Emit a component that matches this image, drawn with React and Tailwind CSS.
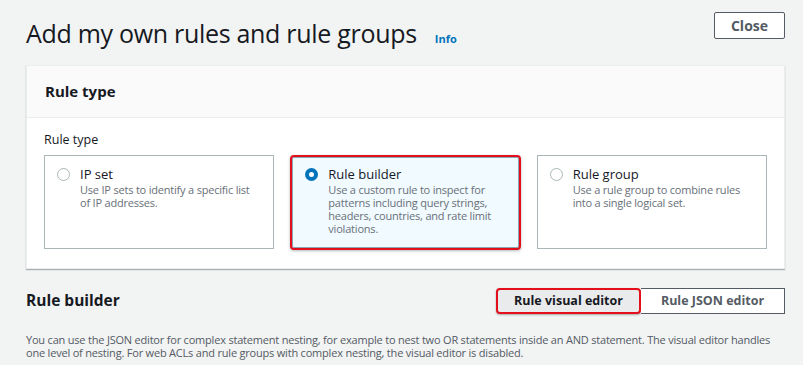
import React, { useState } from 'react';

const ruleTypes = [
  {
    id: 'ipset',
    title: 'IP set',
    desc: 'Use IP sets to identify a specific list of IP addresses.',
  },
  {
    id: 'builder',
    title: 'Rule builder',
    desc: 'Use a custom rule to inspect for patterns including query strings, headers, countries, and rate limit violations.',
  },
  {
    id: 'group',
    title: 'Rule group',
    desc: 'Use a rule group to combine rules into a single logical set.',
  },
];

function Radio({ checked }) {
  if (checked) {
    return (
      <span className="mt-[2px] flex h-[13px] w-[13px] shrink-0 items-center justify-center rounded-full bg-[#0073bb]">
        <span className="h-[5px] w-[5px] rounded-full bg-white" />
      </span>
    );
  }
  return (
    <span className="mt-[2px] h-[13px] w-[13px] shrink-0 rounded-full border border-[#aab7b8] bg-white" />
  );
}

export default function App() {
  const [selected, setSelected] = useState('builder');
  const [editor, setEditor] = useState('visual');

  return (
    <div
      className="h-[365px] w-[803px] overflow-hidden bg-[#f2f3f3] pl-[26px] pr-[18px] text-[#16191f]"
      style={{ fontFamily: '"Open Sans", "Noto Sans", sans-serif' }}
    >
      {/* Page header */}
      <div className="flex items-start justify-between pt-[12px]">
        <div className="flex items-baseline pt-[5px]">
          <h1 className="text-[25px] leading-[32px] font-normal tracking-[-0.3px]">
            Add my own rules and rule groups
          </h1>
          <a className="ml-[18px] text-[11px] font-bold text-[#0073bb]">Info</a>
        </div>
        <button className="h-[27px] w-[71px] rounded-[2px] border border-[#545b64] bg-white text-[14px] font-bold text-[#545b64]">
          Close
        </button>
      </div>

      {/* Rule type panel */}
      <div className="mt-[16px] border border-[#eaeded] bg-white shadow-[0_1px_1px_0_rgba(0,28,36,0.3)]">
        <div className="flex h-[52px] items-center border-b border-[#eaeded] bg-[#fafafa] px-[18px]">
          <h2 className="text-[15px] font-bold">Rule type</h2>
        </div>
        <div className="px-[17px] pt-[14px] pb-[18px]">
          <div className="text-[12.5px] leading-[16px]">Rule type</div>
          <div className="mt-[7px] grid grid-cols-3 gap-[16px]">
            {ruleTypes.map((r) => {
              const on = selected === r.id;
              return (
                <div
                  key={r.id}
                  onClick={() => setSelected(r.id)}
                  className={
                    on
                      ? 'flex h-[95px] gap-[10px] rounded-[4px] border-2 border-[#e3101c] bg-[#f1faff] px-[13px] pt-[9px] shadow-[inset_0_0_0_1px_#8aa7b8,0_1px_3px_rgba(0,28,36,0.3)]'
                      : 'flex h-[94px] gap-[10px] border border-[#aab7b8] bg-white px-[12px] pt-[10px]'
                  }
                >
                  <Radio checked={on} />
                  <div>
                    <div className="text-[13px] leading-[16px]">{r.title}</div>
                    <div className="mt-[1px] text-[11px] leading-[13px] tracking-[-0.2px] text-[#687078]">{r.desc}</div>
                  </div>
                </div>
              );
            })}
          </div>
        </div>
      </div>

      {/* Rule builder */}
      <div className="mt-[19px] flex items-center justify-between">
        <h2 className="text-[15.5px] font-bold">Rule builder</h2>
        <div className="flex h-[26px]">
          <button
            onClick={() => setEditor('visual')}
            className={
              editor === 'visual'
                ? 'w-[145px] rounded-[4px] border-2 border-[#e3101c] bg-[#e9ebed] text-[12.5px] font-bold text-[#16191f] shadow-[0_1px_2px_rgba(0,0,0,0.3)]'
                : 'w-[145px] border border-[#545b64] bg-white text-[12.5px] font-bold text-[#545b64]'
            }
          >
            Rule visual editor
          </button>
          <button
            onClick={() => setEditor('json')}
            className={
              editor === 'json'
                ? 'w-[144px] rounded-[4px] border-2 border-[#e3101c] bg-[#e9ebed] text-[12.5px] font-bold text-[#16191f]'
                : 'w-[144px] border border-l-0 border-[#545b64] bg-white text-[12.5px] font-bold text-[#545b64]'
            }
          >
            Rule JSON editor
          </button>
        </div>
      </div>
      <p className="mt-[19px] text-[11px] leading-[13px] tracking-[-0.2px] text-[#545b64]">
        You can use the JSON editor for complex statement nesting, for example to nest two OR statements inside an AND statement. The visual editor handles one level of nesting. For web ACLs and rule groups with complex nesting, the visual editor is disabled.
      </p>
    </div>
  );
}
